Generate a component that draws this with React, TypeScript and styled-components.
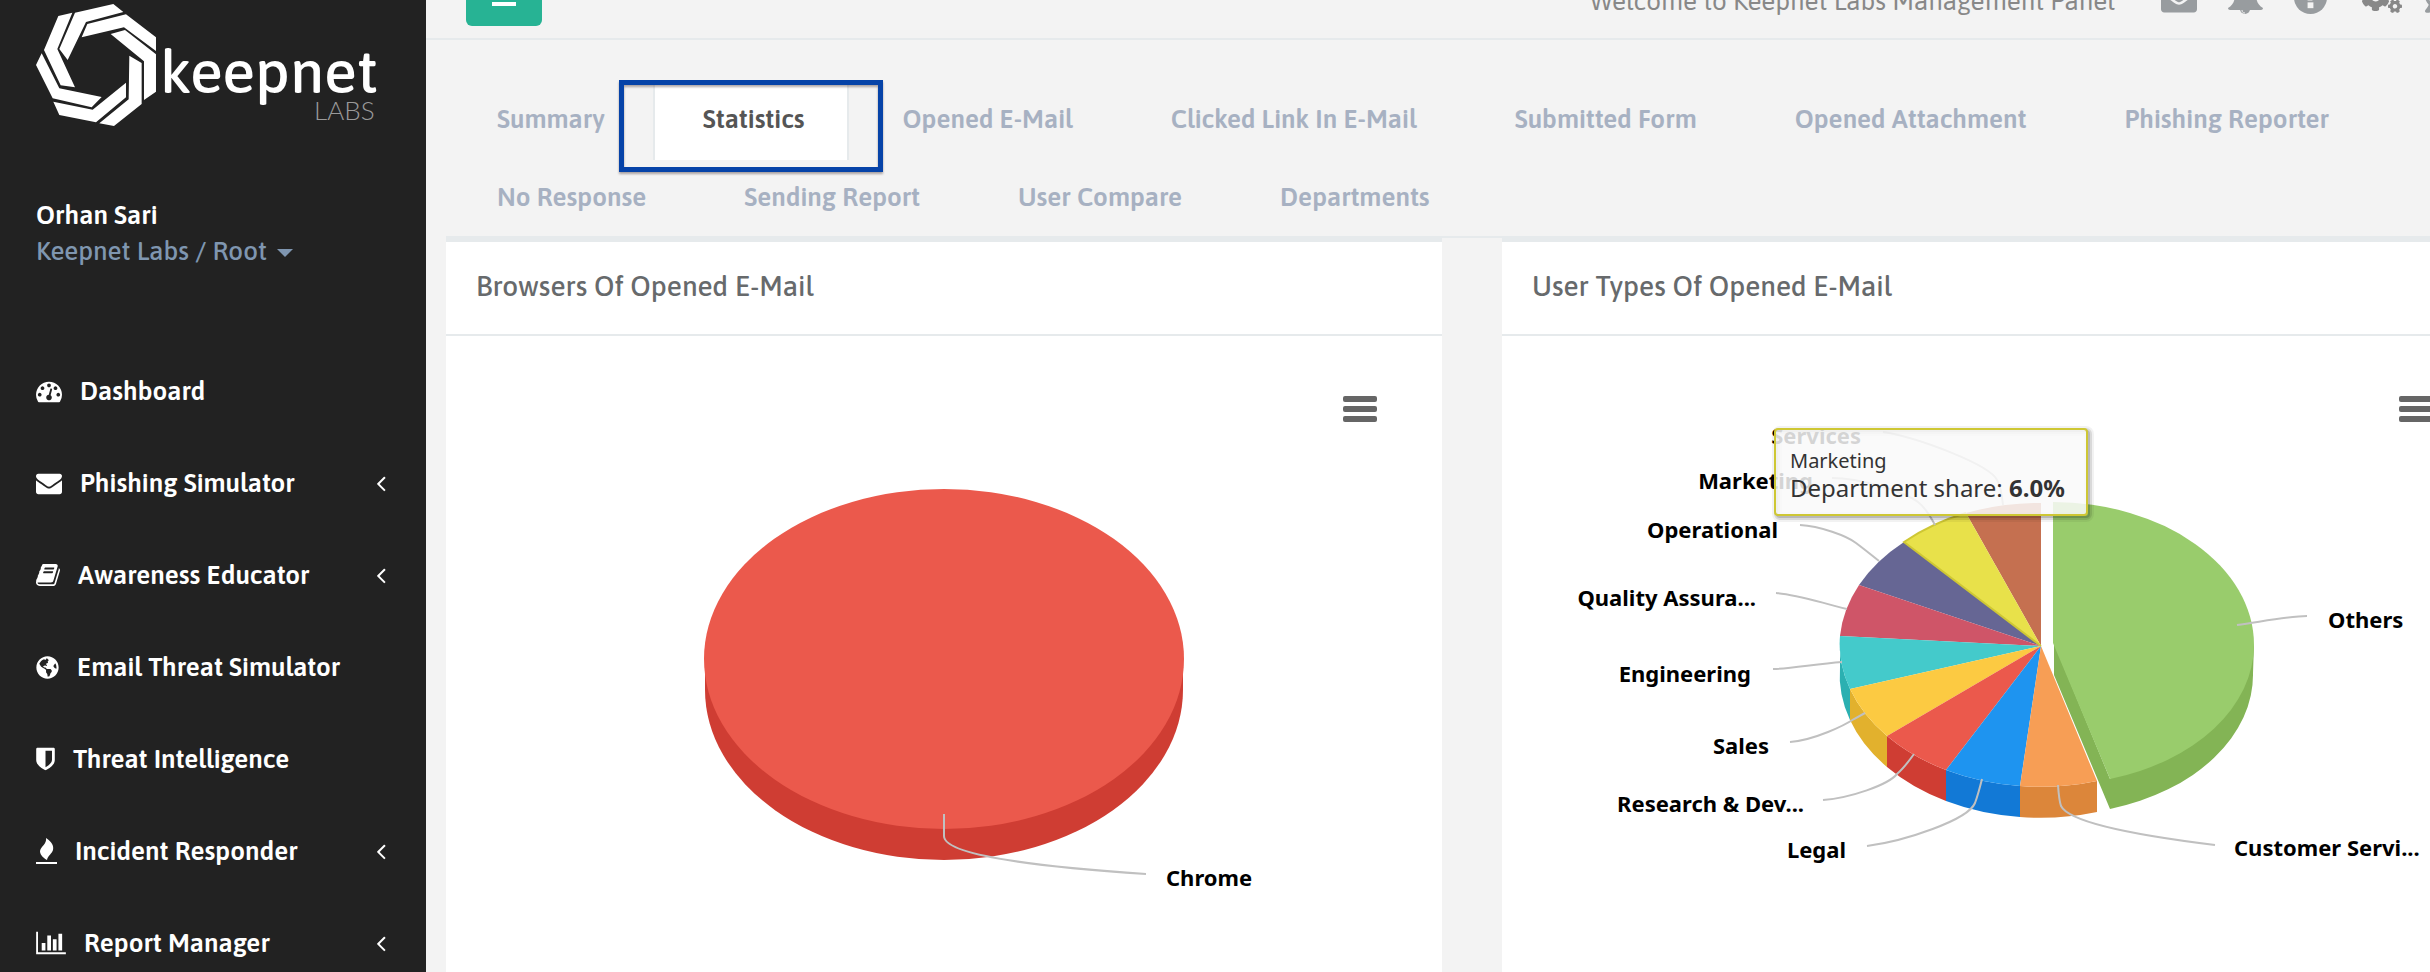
import React from 'react';
import styled, { createGlobalStyle } from 'styled-components';
import { FaCogs, FaGlobeAmericas, FaRegComment } from 'react-icons/fa';

const line = '#e6eaec';
const uiFont = "Asap, Roboto, 'Liberation Sans', sans-serif";
const chartFont = "'Lucida Grande', 'Noto Sans', 'Open Sans', sans-serif";

const GlobalStyle = createGlobalStyle`
  *, *::before, *::after { box-sizing: border-box; }
  body { margin: 0; background: #f3f3f3; font-family: ${uiFont}; font-size: 26px; }
  button { font: inherit; border: 0; padding: 0; background: none; cursor: pointer; }
  a { color: inherit; text-decoration: none; }
`;

const Page = styled.div`
  display: flex;
  height: 100vh;
  overflow: hidden;
`;

const Sidebar = styled.aside`
  flex: 0 0 426px;
  background: #222;
  color: #fff;
  overflow: hidden;
`;

const LogoLink = styled.a`
  display: block;
  padding: 4px 0 0 36px;
  height: 130px;
  svg { display: block; }
`;

const LogoWord = styled.text`
  font-family: ${uiFont};
  font-size: 61px;
  font-weight: 500;
  fill: #fff;
`;

const LogoSuffix = styled.text`
  font-family: Lato, sans-serif;
  font-size: 26px;
  font-weight: 300;
  fill: #9a9a9a;
`;

const Profile = styled.div`
  padding: 67px 36px 0;
  height: 215px;
  display: flex;
  flex-direction: column;
  align-items: flex-start;
  font-weight: 500;
  line-height: 36px;
`;

const UserName = styled.strong`
  font-weight: 600;
`;

const AccountButton = styled.button`
  display: flex;
  align-items: center;
  gap: 10px;
  font-weight: 500;
  line-height: 36px;
  color: #7f96b0;
`;

const Caret = styled.span`
  border: 8px solid transparent;
  border-top-color: currentColor;
  border-bottom-width: 0;
  margin-top: 4px;
`;

const NavItem = styled.a`
  display: flex;
  align-items: center;
  gap: 18px;
  height: 92px;
  padding: 0 38px 0 36px;
  font-weight: 600;
  & > svg { flex: none; }
`;

const NavArrow = styled.svg`
  margin-left: auto;
`;

const Main = styled.main`
  flex: 1;
  min-width: 0;
  overflow: hidden;
  background: #f3f3f3;
`;

const Topbar = styled.header`
  display: flex;
  align-items: center;
  height: 80px;
  margin-top: -40px;
  padding: 4px 0 0 40px;
  border-bottom: 2px solid ${line};
  color: #888;
`;

const ToggleButton = styled.button`
  display: flex;
  align-items: center;
  justify-content: center;
  width: 76px;
  height: 50px;
  padding-bottom: 10px;
  border-radius: 6px;
  background: #27b394;
`;

const Welcome = styled.span`
  margin-left: auto;
  white-space: nowrap;
`;

const IconBar = styled.div`
  display: flex;
  align-items: center;
  width: 315px;
  padding: 0 0 8px 46px;
  gap: 31px;
  color: #989c9f;
`;

const IconButton = styled.button<{ $wide?: boolean }>`
  display: flex;
  flex: none;
  margin: ${(p) => (p.$wide ? '0 -8px 0 4px' : '0')};
  color: ${(p) => (p.$wide ? '#888' : 'inherit')};
`;

const Content = styled.div`
  margin: 42px -68px 0 20px;
`;

const Tabs = styled.nav`
  display: flex;
  flex-wrap: wrap;
  column-gap: 4px;
  padding-left: 1px;
  box-shadow: inset 0 -2px 0 ${line};
`;

const Tab = styled.button<{ $active?: boolean }>`
  position: relative;
  height: 78px;
  padding: 0 42px 4px 48px;
  border: solid ${(p) => (p.$active ? line : 'transparent')};
  border-width: 0 2px;
  background: ${(p) => (p.$active ? '#fff' : 'none')};
  color: ${(p) => (p.$active ? '#555' : '#a7b1c2')};
  font-weight: 600;
  white-space: nowrap;
`;

const Highlight = styled.span`
  position: absolute;
  inset: -2px -36px -12px;
  border: 5px solid #0643a8;
  filter: drop-shadow(0 2px 1px rgba(60, 40, 40, 0.4));
  pointer-events: none;
`;

const Panels = styled.div`
  display: grid;
  grid-template-columns: 1fr 1fr;
  gap: 60px;
`;

const Panel = styled.section`
  border-top: 4px solid ${line};
  background: #fff;
`;

const PanelTitle = styled.h2`
  margin: 0;
  height: 94px;
  padding: 0 30px 4px;
  display: flex;
  align-items: center;
  border-bottom: 2px solid ${line};
  font-size: 28px;
  font-weight: 500;
  color: #676a6c;
`;

const ChartArea = styled.div`
  position: relative;
`;

const ChartMenu = styled.button`
  position: absolute;
  top: 60px;
  right: 65px;
  width: 34px;
  display: grid;
  gap: 4px;
  span { height: 6px; border-radius: 2px; background: #666; }
`;

const Chart = styled.svg`
  display: block;
  width: 100%;
  font-family: ${chartFont};
`;

const Label = styled.text`
  font-size: 22px;
  font-weight: 700;
  fill: #000;
`;

const Connector = styled.path`
  fill: none;
  stroke: #c0c0c0;
  stroke-width: 2px;
`;

const icons = {
  dashboard:
    'M384 1152q0-53-37.5-90.5t-90.5-37.5-90.5 37.5-37.5 90.5 37.5 90.5 90.5 37.5 90.5-37.5 37.5-90.5zm192-448q0-53-37.5-90.5t-90.5-37.5-90.5 37.5-37.5 90.5 37.5 90.5 90.5 37.5 90.5-37.5 37.5-90.5zm428 481l101-382q6-26-7.5-48.5t-38.5-29.5-48 6.5-30 39.5l-101 382q-60 5-107 43.5t-63 98.5q-20 77 20 146t117 89 146-20 89-117q16-60-6-117t-72-91zm660-33q0-53-37.5-90.5t-90.5-37.5-90.5 37.5-37.5 90.5 37.5 90.5 90.5 37.5 90.5-37.5 37.5-90.5zm-640-640q0-53-37.5-90.5t-90.5-37.5-90.5 37.5-37.5 90.5 37.5 90.5 90.5 37.5 90.5-37.5 37.5-90.5zm448 192q0-53-37.5-90.5t-90.5-37.5-90.5 37.5-37.5 90.5 37.5 90.5 90.5 37.5 90.5-37.5 37.5-90.5zm320 448q0 261-141 483-19 29-54 29h-1402q-35 0-54-29-141-221-141-483 0-182 71-348t191-286 286-191 348-71 348 71 286 191 191 286 71 348z',
  envelope:
    'M1792 710v794q0 66-47 113t-113 47h-1472q-66 0-113-47t-47-113v-794q44 49 101 87 362 246 497 345 57 42 92.5 65.5t94.5 48 110 24.5h2q51 0 110-24.5t94.5-48 92.5-65.5q170-123 498-345 57-39 100-87zm0-294q0 79-49 151t-122 123q-376 261-468 325-10 7-42.5 31t-54 38.5-52 32.5-57.5 27-50 9h-2q-23 0-50-9t-57.5-27-52-32.5-54-38.5-42.5-31q-91-64-262-182.5t-205-142.5q-62-42-117-115.5t-55-136.5q0-78 41.5-130t118.5-52h1472q65 0 112.5 47t47.5 113z',
  book: 'M1703 478q40 57 18 129l-275 906q-19 64-76.5 107.5t-122.5 43.5h-923q-77 0-148.5-53.5t-99.5-131.5q-24-67-2-127 0-4 3-27t4-37q1-8-3-21.5t-3-19.5q2-11 8-21t16.5-23.5 16.5-23.5q23-38 45-91.5t30-91.5q3-10 .5-30t-.5-28q3-11 17-28t17-23q21-36 42-92t25-90q1-9-2.5-32t.5-28q4-13 22-30.5t22-22.5q19-26 42.5-84.5t27.5-96.5q1-8-3-25.5t-2-26.5q2-8 9-18t18-23 17-21q8-12 16.5-30.5t15-35 16-36 19.5-32 26.5-23.5 36-11.5 47.5 5.5l-1 3q38-9 51-9h761q74 0 114 56t18 130l-274 906q-36 119-71.5 153.5t-128.5 34.5h-869q-27 0-38 15-11 16-1 43 24 70 144 70h923q29 0 56-15.5t35-41.5l300-987q7-22 5-57 38 15 59 43zm-1064 2q-4 13 2 22.5t20 9.5h608q13 0 25.5-9.5t16.5-22.5l21-64q4-13-2-22.5t-20-9.5h-608q-13 0-25.5 9.5t-16.5 22.5zm-83 256q-4 13 2 22.5t20 9.5h608q13 0 25.5-9.5t16.5-22.5l21-64q4-13-2-22.5t-20-9.5h-608q-13 0-25.5 9.5t-16.5 22.5z',
  shield:
    'M1344 960v-640h-448v1137q119-63 213-137 235-184 235-360zm192-768v768q0 86-33.5 170.5t-83 150-118 127.5-126.5 103-121 77.5-89.5 49.5-42.5 20q-12 6-26 6t-26-6q-16-7-42.5-20t-89.5-49.5-121-77.5-126.5-103-118-127.5-83-150-33.5-170.5v-768q0-26 19-45t45-19h1152q26 0 45 19t19 45z',
  barChart:
    'M640 896v512h-256v-512h256zm384-512v1024h-256v-1024h256zm1024 1152v128h-2048v-1536h128v1408h1920zm-640-896v768h-256v-768h256zm384-384v1152h-256v-1152h256z',
  angleLeft:
    'M1203 544q0 13-10 23l-393 393 393 393q10 10 10 23t-10 23l-50 50q-10 10-23 10t-23-10l-466-466q-10-10-10-23t10-23l466-466q10-10 23-10t23 10l50 50q10 10 10 23z',
};

type GlyphProps = { d: string; box: string; width: number; height: number };

const Glyph = ({ d, box, width, height }: GlyphProps) => (
  <svg width={width} height={height} viewBox={box} fill="currentColor" aria-hidden="true">
    <path d={d} />
  </svg>
);

const FireIcon = () => (
  <svg width="21" height="26" viewBox="0 0 21 26" fill="currentColor" aria-hidden="true">
    <path d="M10 0c6 4 8 8 7 12-1 4-5 5-6 10C6 19 4 16 4 13c1-5 7-7 6-13z" />
    <path d="M0 24h21v2H0z" />
  </svg>
);

const BellIcon = () => (
  <svg width="35" height="34" viewBox="0 0 35 34" fill="currentColor" aria-hidden="true">
    <path d="M17 0c1 0 2 1 2 3 6 1 9 5 9 11 0 7 2 11 7 14 0 1-1 2-2 2H2c-1 0-2-1-2-2 5-3 7-7 7-14C7 8 10 4 15 3c0-2 1-3 2-3z" />
    <path d="M12 29h10a5 5 0 0 1-10 0z" />
    <path d="M14 30c0 2 1 3 3 3" fill="none" stroke="#f3f3f3" strokeWidth="1" />
  </svg>
);

const HelpIcon = () => (
  <svg width="33" height="33" viewBox="0 0 34 34" aria-hidden="true">
    <circle cx="17" cy="17" r="17" fill="currentColor" />
    <path d="M11 12c1-8 14-7 13 0 0 4-5 4-5 8h-5c0-6 5-5 5-8 0-2-3-2-4 1z" fill="#f3f3f3" />
    <path d="M14 22h6v6h-6z" fill="#f3f3f3" />
  </svg>
);

const Logo = () => (
  <svg width="342" height="124" viewBox="36 4 342 124" role="img" aria-label="Keepnet Labs">
    <g fill="#fff" transform="scale(0.3333)">
      <path d="M225 38L340 12L370 36L258 66L203 180L178 147z" />
      <path d="M175 48L217 38L172 147L225 262L182 256L132 150z" />
      <path d="M125 160L178 265L305 291L275 322L158 295L108 195z" />
      <path d="M160 305L278 329L378 248V292L288 367L178 345z" />
      <path d="M388 167L425 189V312L342 378L298 370L386 298z" />
      <path d="M332 102L375 90L468 163V275L432 300V184z" />
      <path d="M245 112L262 72L378 43L468 112V153L372 82z" />
    </g>
    <LogoWord x="160" y="93">keepnet</LogoWord>
    <LogoSuffix x="314" y="120">LABS</LogoSuffix>
  </svg>
);

const navItems = [
  { label: 'Dashboard', icon: <Glyph d={icons.dashboard} box="0 0 1792 1792" width={26} height={26} /> },
  { label: 'Phishing Simulator', icon: <Glyph d={icons.envelope} box="0 0 1792 1792" width={26} height={26} />, open: true },
  { label: 'Awareness Educator', icon: <Glyph d={icons.book} box="64 0 1664 1792" width={24} height={26} />, open: true },
  { label: 'Email Threat Simulator', icon: <FaGlobeAmericas size={23} /> },
  { label: 'Threat Intelligence', icon: <Glyph d={icons.shield} box="256 0 1280 1792" width={19} height={26} /> },
  { label: 'Incident Responder', icon: <FireIcon />, open: true },
  { label: 'Report Manager', icon: <Glyph d={icons.barChart} box="0 0 2048 1792" width={30} height={26} />, open: true },
];

const tabs = [
  'Summary',
  'Statistics',
  'Opened E-Mail',
  'Clicked Link In E-Mail',
  'Submitted Form',
  'Opened Attachment',
  'Phishing Reporter',
  'No Response',
  'Sending Report',
  'User Compare',
  'Departments',
];

const slices = [
  { from: [2041, 503], to: [1966, 513], fill: '#c57050' },
  { from: [1966, 513], to: [1904, 542], fill: '#e8e14a' },
  { from: [1904, 542], to: [1859, 585], fill: '#666694' },
  { from: [1859, 585], to: [1840, 636], fill: '#cf5568' },
  { from: [1840, 636], to: [1850, 689], fill: '#44cacb', side: '#2bb0b1' },
  { from: [1850, 689], to: [1887, 736], fill: '#fcca42', side: '#e2b12d' },
  { from: [1887, 736], to: [1946, 770], fill: '#eb594c', side: '#cf3d33' },
  { from: [1946, 770], to: [2020, 786], fill: '#1e94f0', side: '#1279d6' },
  { from: [2020, 786], to: [2097, 781], fill: '#f79e55', side: '#dc863a' },
];

const leftLabels = [
  { text: 'Services', x: 1861, y: 444 },
  { text: 'Marketing', x: 1813, y: 489 },
  { text: 'Operational', x: 1778, y: 538 },
  { text: 'Quality Assura...', x: 1756, y: 606 },
  { text: 'Engineering', x: 1751, y: 682 },
  { text: 'Sales', x: 1769, y: 754 },
  { text: 'Research & Dev...', x: 1804, y: 812 },
  { text: 'Legal', x: 1846, y: 858 },
];

const connectors = [
  'M2307 616C2292 616 2265 621 2237 625',
  'M2215 845C2150 837 2070 824 2061 806Q2059 800 2058 785',
  'M1867 846C1905 841 1968 820 1975 803Q1978 795 1982 779',
  'M1823 800C1850 798 1888 785 1897 774Q1904 768 1914 754',
  'M1790 742C1815 740 1845 725 1854 719L1865 713',
  'M1773 669C1790 669 1815 664 1842 662',
  'M1776 593C1795 594 1815 601 1847 609',
  'M1800 525C1820 526 1847 536 1856 543Q1864 549 1879 561',
  'M1832 478C1860 478 1905 492 1918 502Q1926 508 1935 525',
  'M1883 432C1920 438 1990 465 1997 480Q2001 486 2003 505',
];

const PieSlice = ({ slice }: { slice: (typeof slices)[number] }) => {
  const [ax, ay] = slice.from;
  const [bx, by] = slice.to;
  return (
    <g>
      {slice.side && (
        <path
          fill={slice.side}
          d={`M${ax} ${ay}A201 143 0 0 0 ${bx} ${by}V${by + 31}A201 143 0 0 1 ${ax} ${ay + 31}z`}
        />
      )}
      <path fill={slice.fill} d={`M2041 646L${ax} ${ay}A201 143 0 0 0 ${bx} ${by}z`} />
    </g>
  );
};

const BrowserChart = () => (
  <Chart viewBox="446 336 996 660" role="img" aria-label="Browsers of opened e-mail">
    <path d="M705 662V690A239 170 0 0 0 1183 690V662z" fill="#cf3d33" />
    <ellipse cx="944" cy="659" rx="240" ry="170" fill="#eb594c" />
    <Connector d="M944 814V836C944 856 1043 867 1146 874" />
    <Label x="1166" y="886">Chrome</Label>
  </Chart>
);

const UserTypeChart = () => (
  <Chart viewBox="1502 336 996 660" role="img" aria-label="User types of opened e-mail">
    {slices.map((s) => (
      <PieSlice key={s.fill} slice={s} />
    ))}
    <path d="M1966 513A201 143 0 0 0 1904 542L2041 646" fill="none" stroke="#cec734" strokeWidth="2" />
    <path d="M2054 643L2110 779V809L2054 675zM2254 645L2253 673A200 140 0 0 1 2110 809V779z" fill="#83b455" />
    <path d="M2053 502A201 143 0 0 1 2254 645A201 140 0 0 1 2110 779L2053 643z" fill="#99cc6c" />
    {connectors.map((d) => (
      <Connector key={d} d={d} />
    ))}
    {leftLabels.map((l) => (
      <Label key={l.text} x={l.x} y={l.y} textAnchor="end">
        {l.text}
      </Label>
    ))}
    <Label x="2328" y="628">Others</Label>
    <Label x="2234" y="856">Customer Servi...</Label>
    <g fill="none" stroke="#000">
      <rect x="1777" y="431" width="312" height="86" rx="3" strokeOpacity="0.05" strokeWidth="10" />
      <rect x="1777" y="431" width="312" height="86" rx="3" strokeOpacity="0.1" strokeWidth="6" />
      <rect x="1777" y="431" width="312" height="86" rx="3" strokeOpacity="0.15" strokeWidth="2" />
    </g>
    <rect x="1775" y="429" width="312" height="86" rx="3" fill="#f9f9f9" fillOpacity="0.85" stroke="#cec734" strokeWidth="2" />
    <text x="1790" y="468" fontSize="20" fill="#333">Marketing</text>
    <text x="1790" y="497" fontSize="24" fill="#333">
      Department share: <tspan fontWeight="700">6.0%</tspan>
    </text>
  </Chart>
);

const ChartPanel = ({ title, children }: { title: string; children: React.ReactNode }) => (
  <Panel>
    <PanelTitle>{title}</PanelTitle>
    <ChartArea>
      {children}
      <ChartMenu aria-label="Chart context menu">
        <span />
        <span />
        <span />
      </ChartMenu>
    </ChartArea>
  </Panel>
);

export default function App() {
  return (
    <>
      <GlobalStyle />
      <Page>
        <Sidebar>
          <LogoLink href="#home">
            <Logo />
          </LogoLink>
          <Profile>
            <UserName>Orhan Sari</UserName>
            <AccountButton>
              Keepnet Labs / Root
              <Caret />
            </AccountButton>
          </Profile>
          <nav>
            {navItems.map((item) => (
              <NavItem key={item.label} href="#nav">
                {item.icon}
                {item.label}
                {item.open && (
                  <NavArrow width="13" height="26" viewBox="480 0 896 1792" fill="currentColor" aria-hidden="true">
                    <path d={icons.angleLeft} />
                  </NavArrow>
                )}
              </NavItem>
            ))}
          </nav>
        </Sidebar>
        <Main>
          <Topbar>
            <ToggleButton aria-label="Toggle navigation">
              <svg width="24" height="20" viewBox="0 0 24 20" fill="#fff" aria-hidden="true">
                <path d="M0 0h24v4H0zM0 8h24v4H0zM0 16h24v4H0z" />
              </svg>
            </ToggleButton>
            <Welcome>Welcome to Keepnet Labs Management Panel</Welcome>
            <IconBar>
              <IconButton aria-label="Messages">
                <Glyph d={icons.envelope} box="0 0 1792 1792" width={36} height={36} />
              </IconButton>
              <IconButton aria-label="Notifications">
                <BellIcon />
              </IconButton>
              <IconButton aria-label="Help">
                <HelpIcon />
              </IconButton>
              <IconButton $wide aria-label="Settings">
                <FaCogs size={40} />
              </IconButton>
              <IconButton aria-label="Chat">
                <FaRegComment size={36} />
              </IconButton>
            </IconBar>
          </Topbar>
          <Content>
            <Tabs>
              {tabs.map((t) => (
                <Tab key={t} $active={t === 'Statistics'}>
                  {t}
                  {t === 'Statistics' && <Highlight />}
                </Tab>
              ))}
            </Tabs>
            <Panels>
              <ChartPanel title="Browsers Of Opened E-Mail">
                <BrowserChart />
              </ChartPanel>
              <ChartPanel title="User Types Of Opened E-Mail">
                <UserTypeChart />
              </ChartPanel>
            </Panels>
          </Content>
        </Main>
      </Page>
    </>
  );
}
